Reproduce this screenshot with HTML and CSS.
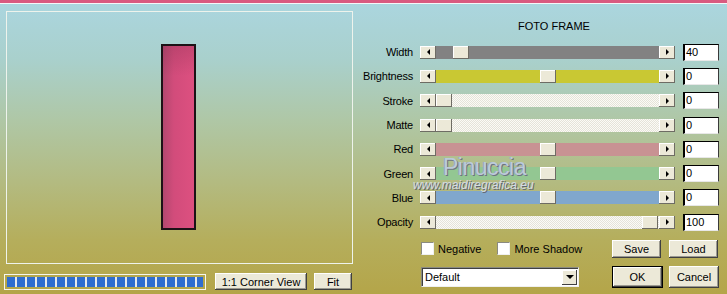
FILE: index.html
```html
<!DOCTYPE html>
<html lang="en">

<head>
  <meta charset="UTF-8">
  <title>Foto Frame</title>
  <link rel="stylesheet" href="styles.css">
</head>

<body>
  <div class="topbar"></div>
  <div class="dialog">
    <div class="preview-col">
      <div class="preview">
        <div class="frame-bar"></div>
      </div>
      <div class="preview-tools">
        <div class="progress"></div>
        <button class="btn corner">1:1 Corner View</button>
        <button class="btn fit">Fit</button>
      </div>
    </div>

    <div class="settings">
      <div class="title">FOTO FRAME</div>
      <div class="sliders">
        <div class="row">
          <span class="lbl">Width</span>
          <div class="scroll">
            <span class="arrow left"></span>
            <div class="track gray"><span class="thumb" style="left:17px"></span></div>
            <span class="arrow right"></span>
          </div>
          <div class="num">40</div>
        </div>
        <div class="row">
          <span class="lbl">Brightness</span>
          <div class="scroll">
            <span class="arrow left"></span>
            <div class="track yellow"><span class="thumb" style="left:104px"></span></div>
            <span class="arrow right"></span>
          </div>
          <div class="num">0</div>
        </div>
        <div class="row">
          <span class="lbl">Stroke</span>
          <div class="scroll">
            <span class="arrow left"></span>
            <div class="track hatch"><span class="thumb" style="left:0px"></span></div>
            <span class="arrow right"></span>
          </div>
          <div class="num">0</div>
        </div>
        <div class="row">
          <span class="lbl">Matte</span>
          <div class="scroll">
            <span class="arrow left"></span>
            <div class="track hatch"><span class="thumb" style="left:0px"></span></div>
            <span class="arrow right"></span>
          </div>
          <div class="num">0</div>
        </div>
        <div class="row">
          <span class="lbl">Red</span>
          <div class="scroll">
            <span class="arrow left"></span>
            <div class="track red"><span class="thumb" style="left:104px"></span></div>
            <span class="arrow right"></span>
          </div>
          <div class="num">0</div>
        </div>
        <div class="row">
          <span class="lbl">Green</span>
          <div class="scroll">
            <span class="arrow left"></span>
            <div class="track green"><span class="thumb" style="left:104px"></span></div>
            <span class="arrow right"></span>
          </div>
          <div class="num">0</div>
        </div>
        <div class="row">
          <span class="lbl">Blue</span>
          <div class="scroll">
            <span class="arrow left"></span>
            <div class="track blue"><span class="thumb" style="left:104px"></span></div>
            <span class="arrow right"></span>
          </div>
          <div class="num">0</div>
        </div>
        <div class="row">
          <span class="lbl">Opacity</span>
          <div class="scroll">
            <span class="arrow left"></span>
            <div class="track hatch"><span class="thumb" style="left:206px"></span></div>
            <span class="arrow right"></span>
          </div>
          <div class="num">100</div>
        </div>
      </div>

      <div class="opts">
        <label class="check"><span class="box"></span>Negative</label>
        <label class="check shadow"><span class="box"></span>More Shadow</label>
        <button class="btn small save">Save</button>
        <button class="btn small load">Load</button>
      </div>
      <div class="opts second">
        <div class="select">
          <span class="select-text">Default</span>
          <span class="select-btn"></span>
        </div>
        <button class="btn ok">OK</button>
        <button class="btn cancel">Cancel</button>
      </div>
    </div>
  </div>

  <div class="watermark">
    <div class="wm-name">Pinuccia</div>
    <div class="wm-url">www.maidiregrafica.eu</div>
  </div>
</body>

</html>
```

FILE: styles.css
```css
:root {
  --face: #ece9d8;
  --pink: #d95a80;
}

body {
  margin: 0;
  width: 727px;
  height: 294px;
  overflow: hidden;
  position: relative;
  font-family: "Liberation Sans", Arial, sans-serif;
  font-size: 11px;
  color: #000;
  background: linear-gradient(to bottom,
      #abd6e0 0px,
      #a9d0cc 60px,
      #afc7a6 120px,
      #b3bb82 180px,
      #b5ae5c 240px,
      #b4a549 294px);
}

.topbar {
  height: 3px;
  background-color: var(--pink);
  border-bottom: 1px solid #f4f7f8;
}

.dialog {
  display: flex;
}

/* left side: preview */
.preview-col {
  width: 360px;
  padding-left: 5px;
  box-sizing: border-box;
}

.preview {
  margin-top: 7px;
  margin-left: 1px;
  width: 347px;
  height: 253px;
  box-sizing: border-box;
  border: 1px solid #eef3ec;
  padding: 32px 0 0 154px;
}

.frame-bar {
  width: 35px;
  height: 186px;
  box-sizing: border-box;
  border: 2px solid #1c1216;
  background:
    linear-gradient(to bottom, rgba(120, 40, 70, 0.25), transparent 30px),
    linear-gradient(to right, #b3486f, #d24c7b 35%, #dd5080);
}

.preview-tools {
  display: flex;
  align-items: center;
  margin-top: 9px;
}

.progress {
  width: 202px;
  height: 16px;
  margin-left: -1px;
  box-sizing: border-box;
  border: 1px solid #f6f6f0;
  padding: 2px;
  background-color: #e4e8ee;
  background-image: repeating-linear-gradient(to right,
      #2f6dd0 0px, #2f6dd0 8px,
      transparent 8px, transparent 10px);
  background-origin: content-box;
  background-clip: content-box;
}

.btn {
  font-family: inherit;
  font-size: 11px;
  color: #000;
  background-color: var(--face);
  border: none;
  padding: 0;
  box-shadow: inset -1px -1px #404040, inset 1px 1px #fff, inset -2px -2px #9c9a90;
}

.corner {
  width: 92px;
  height: 17px;
  margin-left: 9px;
}

.fit {
  width: 38px;
  height: 17px;
  margin-left: 7px;
}

/* right side: settings */
.settings {
  flex: 1;
  padding-top: 16px;
}

.title {
  line-height: 13px;
  padding-left: 158px;
}

.sliders {
  margin-top: 7px;
}

.row {
  display: flex;
  align-items: center;
  height: 24.3px;
}

.lbl {
  width: 53px;
  text-align: right;
  margin-right: 7px;
  letter-spacing: -0.2px;
}

.scroll {
  display: flex;
  width: 255px;
  height: 13px;
}

.arrow {
  width: 16px;
  height: 13px;
  background-color: var(--face);
  box-shadow: inset -1px -1px #6e6c64, inset 1px 1px #fff;
  display: flex;
  align-items: center;
  justify-content: center;
}

.arrow::before {
  content: '';
  border-top: 3px solid transparent;
  border-bottom: 3px solid transparent;
}

.arrow.left::before {
  border-right: 3px solid #000;
}

.arrow.right::before {
  border-left: 3px solid #000;
}

.track {
  flex: 1;
  position: relative;
}

.track.gray { background-color: #828282; }
.track.yellow { background-color: #c9c833; }
.track.red { background-color: #c89293; }
.track.green { background-color: #93c792; }
.track.blue { background-color: #80a7cd; }

.track.hatch {
  background: repeating-conic-gradient(#fbfbf6 0 25%, #e5e3d9 0 50%) 0 0 / 2px 2px;
}

.thumb {
  position: absolute;
  top: 0;
  width: 16px;
  height: 13px;
  background-color: var(--face);
  box-shadow: inset -1px -1px #6e6c64, inset 1px 1px #fff;
}

.num {
  width: 36px;
  height: 17px;
  margin-left: 8px;
  box-sizing: border-box;
  background-color: #fff;
  border-top: 1px solid #000;
  border-left: 2px solid #000;
  border-right: 1px solid #3a3a3a;
  border-bottom: 1px solid #e8e8e8;
  padding-left: 1px;
  line-height: 15px;
}

/* options and buttons */
.opts {
  display: flex;
  align-items: center;
  padding-left: 61px;
  padding-right: 9px;
  margin-top: 5px;
  height: 19px;
}

.opts.second {
  margin-top: 8px;
  height: 22px;
  padding-right: 8px;
}

.check {
  display: flex;
  align-items: center;
}

.box {
  width: 13px;
  height: 13px;
  box-sizing: border-box;
  background-color: #fff;
  border-top: 1px solid #8a8a80;
  border-left: 1px solid #8a8a80;
  border-right: 1px solid #f0f0f0;
  border-bottom: 1px solid #f0f0f0;
  margin-right: 4px;
}

.check.shadow {
  margin-left: 16px;
}

.small {
  width: 49px;
  height: 18px;
}

.save {
  margin-left: auto;
}

.load {
  margin-left: 8px;
}

.select {
  display: flex;
  align-items: center;
  width: 158px;
  height: 20px;
  box-sizing: border-box;
  background-color: #fff;
  border-top: 1px solid #8a8a80;
  border-left: 1px solid #8a8a80;
  border-right: 1px solid #f0f0f0;
  border-bottom: 1px solid #f0f0f0;
  box-shadow: inset 1px 1px #404040;
  padding: 0 1px 0 3px;
}

.select-text {
  flex: 1;
}

.select-btn {
  width: 15px;
  height: 15px;
  background-color: var(--face);
  box-shadow: inset -1px -1px #404040, inset 1px 1px #fff;
  display: flex;
  align-items: center;
  justify-content: center;
}

.select-btn::before {
  content: '';
  border-left: 4px solid transparent;
  border-right: 4px solid transparent;
  border-top: 4px solid #000;
}

.ok {
  width: 51px;
  height: 22px;
  margin-left: auto;
  border: 1px solid #000;
}

.cancel {
  width: 50px;
  height: 22px;
  margin-left: 6px;
}

/* watermark laid over the sliders */
.watermark {
  position: absolute;
  left: 413px;
  top: 155px;
  color: #bccbd9;
}

.wm-name {
  margin-left: 30px;
  font-size: 23px;
  line-height: 24px;
  letter-spacing: -0.5px;
  text-shadow: 1px 1px 0 #6c7384, -1px 0 0 #9aa6b4;
}

.wm-url {
  font-size: 12px;
  font-style: italic;
  line-height: 13px;
  color: #d4dce4;
  text-shadow: 1px 1px 0 #5f6470;
}
```
